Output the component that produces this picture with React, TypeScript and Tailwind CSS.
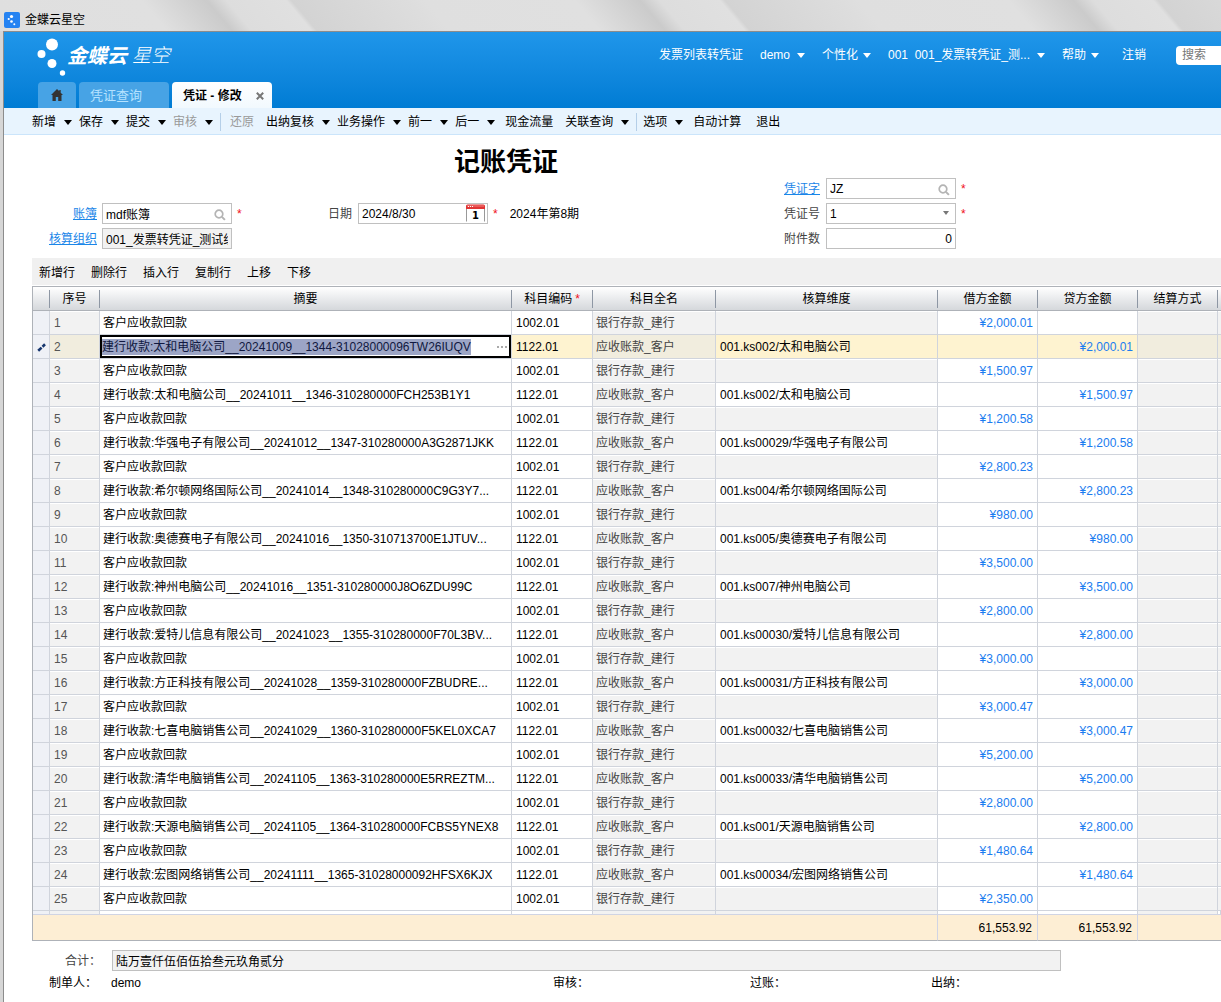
import React, { useEffect, useRef } from 'react';
import clsx from 'clsx';

type Entry = { summary: string; dimension?: string; amount: string };

const received = (amount: string): Entry => ({ summary: '客户应收款回款', amount });

// debit and credit lines alternate: bank account first, then the customer
const entries: Entry[] = [
    received('¥2,000.01'),
    { summary: '建行收款:太和电脑公司__20241009__1344-31028000096TW26IUQV', dimension: '001.ks002/太和电脑公司', amount: '¥2,000.01' },
    received('¥1,500.97'),
    { summary: '建行收款:太和电脑公司__20241011__1346-310280000FCH253B1Y1', dimension: '001.ks002/太和电脑公司', amount: '¥1,500.97' },
    received('¥1,200.58'),
    { summary: '建行收款:华强电子有限公司__20241012__1347-310280000A3G2871JKK', dimension: '001.ks00029/华强电子有限公司', amount: '¥1,200.58' },
    received('¥2,800.23'),
    { summary: '建行收款:希尔顿网络国际公司__20241014__1348-310280000C9G3Y7...', dimension: '001.ks004/希尔顿网络国际公司', amount: '¥2,800.23' },
    received('¥980.00'),
    { summary: '建行收款:奥德赛电子有限公司__20241016__1350-310713700E1JTUV...', dimension: '001.ks005/奥德赛电子有限公司', amount: '¥980.00' },
    received('¥3,500.00'),
    { summary: '建行收款:神州电脑公司__20241016__1351-310280000J8O6ZDU99C', dimension: '001.ks007/神州电脑公司', amount: '¥3,500.00' },
    received('¥2,800.00'),
    { summary: '建行收款:爱特儿信息有限公司__20241023__1355-310280000F70L3BV...', dimension: '001.ks00030/爱特儿信息有限公司', amount: '¥2,800.00' },
    received('¥3,000.00'),
    { summary: '建行收款:方正科技有限公司__20241028__1359-310280000FZBUDRE...', dimension: '001.ks00031/方正科技有限公司', amount: '¥3,000.00' },
    received('¥3,000.47'),
    { summary: '建行收款:七喜电脑销售公司__20241029__1360-310280000F5KEL0XCA7', dimension: '001.ks00032/七喜电脑销售公司', amount: '¥3,000.47' },
    received('¥5,200.00'),
    { summary: '建行收款:清华电脑销售公司__20241105__1363-310280000E5RREZTM...', dimension: '001.ks00033/清华电脑销售公司', amount: '¥5,200.00' },
    received('¥2,800.00'),
    { summary: '建行收款:天源电脑销售公司__20241105__1364-310280000FCBS5YNEX8', dimension: '001.ks001/天源电脑销售公司', amount: '¥2,800.00' },
    received('¥1,480.64'),
    { summary: '建行收款:宏图网络销售公司__20241111__1365-31028000092HFSX6KJX', dimension: '001.ks00034/宏图网络销售公司', amount: '¥1,480.64' },
    received('¥2,350.00'),
];

const EDITING = 1;

const columns = ['', '序号', '摘要', '科目编码', '科目全名', '核算维度', '借方金额', '贷方金额', '结算方式', ''];

const toolbar: { label: string; menu?: boolean; disabled?: boolean; divider?: boolean }[] = [
    { label: '新增', menu: true },
    { label: '保存', menu: true },
    { label: '提交', menu: true },
    { label: '审核', menu: true, disabled: true, divider: true },
    { label: '还原', disabled: true },
    { label: '出纳复核', menu: true },
    { label: '业务操作', menu: true },
    { label: '前一', menu: true },
    { label: '后一', menu: true },
    { label: '现金流量' },
    { label: '关联查询', menu: true, divider: true },
    { label: '选项', menu: true },
    { label: '自动计算' },
    { label: '退出' },
];

const Caret = () => (
    <svg width="8" height="5" viewBox="0 0 8 5" fill="currentColor" aria-hidden="true">
        <path d="M0 0h8L4 5z" />
    </svg>
);

const SearchIcon = () => (
    <svg className="absolute right-[6px] top-[6px]" width="12" height="12" viewBox="0 0 12 12" fill="none" stroke="#b4b4b4" aria-hidden="true">
        <circle cx="5" cy="5" r="3.8" strokeWidth="1.7" />
        <path d="M7.9 7.9l3 3" strokeWidth="2" />
    </svg>
);

const CalendarIcon = () => (
    <svg className="absolute right-[3px] top-[1px]" width="19" height="18" viewBox="0 0 19 18" aria-hidden="true">
        <path d="M.5 4v13.5M18.5 4v13.5" stroke="#999" />
        <path d="M0 2a1.500 1.500 0 0 1 1.500-1.500h16A1.500 1.500 0 0 1 19 2v3H0z" fill="#e03535" />
        <path d="M1 1.500h17v1H1z" fill="#f58080" />
        <path d="M2 2.500h1M4 2.500h1M6 2.500h1" stroke="#fff" />
        <text x="9.500" y="15" textAnchor="middle" fontSize="10" fontWeight="bold" fontFamily="DejaVu Sans, sans-serif">1</text>
    </svg>
);

const Logo = () => (
    <div className="flex text-white">
        <svg width="30" height="38" viewBox="0 0 30 38" fill="currentColor" aria-hidden="true">
            <circle cx="15" cy="6.500" r="6" />
            <circle cx="4.500" cy="16" r="4" />
            <circle cx="15" cy="25.500" r="4.500" />
            <circle cx="25.500" cy="35" r="2.700" />
        </svg>
        <span className="flex h-[36px] items-center gap-[5px] whitespace-nowrap text-[20px] leading-6">
            <b className="italic">金蝶云</b>
            <span className="text-[19px] font-light italic">星空</span>
        </span>
    </div>
);

const Required = () => <span className="ml-[5px] text-[#f01020]">*</span>;

const box = 'h-[21px] w-full border border-[#c0c0c0] px-[3px] text-black outline-none';

const NavMenu = ({ label, className }: { label: string; className?: string }) => (
    <button className="flex items-center gap-[5px] whitespace-nowrap">
        <span className={className}>{label}</span>
        <Caret />
    </button>
);

const Header = () => (
    <header className="bg-gradient-to-b from-[#1f96ea] to-[#007cd4] text-white">
        <div className="flex h-[50px] items-start justify-between pl-[33px]">
            <div className="pt-[6px]">
                <Logo />
            </div>
            <nav className="flex h-[46px] items-center gap-[17px]">
                <a href="#voucher" className="whitespace-nowrap">发票列表转凭证</a>
                <NavMenu label="demo" className="w-8 text-left" />
                <NavMenu label="个性化" />
                <NavMenu label="001  001_发票转凭证_测..." className="w-[144px] whitespace-pre text-left" />
                <NavMenu label="帮助" />
                <a href="#logout" className="ml-[6px] mr-[13px] whitespace-nowrap">注销</a>
                <input
                    aria-label="搜索"
                    placeholder="搜索"
                    className="h-[19px] w-[45px] rounded-l bg-white px-[6px] text-black outline-none placeholder:text-[#777]"
                />
            </nav>
        </div>
        <div className="flex h-[26px] gap-[3px] pl-[34px]">
            <button aria-label="首页" className="flex w-[38px] items-center justify-center rounded-t bg-[#47a3e5] text-[#333]">
                <svg width="12" height="12" viewBox="0 0 12 12" fill="currentColor" aria-hidden="true">
                    <path d="M6 0L0 6h1.500v6h3.300V8h2.400v4h3.300V6H12L9.700 3.700V1H8.300v1.300z" />
                </svg>
            </button>
            <button className="w-[90px] rounded-t bg-[#47a3e5] pl-[11px] pt-[2px] text-left text-[13px] text-[#b5e2ff]">凭证查询</button>
            <div className="flex w-[100px] items-center justify-between rounded-t bg-gradient-to-b from-white to-[#f2f9fe] pl-[11px] pr-2 pt-[2px] font-bold text-black">
                <span>凭证 - 修改</span>
                <button aria-label="关闭" className="text-[#777]">
                    <svg width="8" height="8" viewBox="0 0 8 8" stroke="currentColor" strokeWidth="2" aria-hidden="true">
                        <path d="M.8.8l6.400 6.400M7.200.8L.8 7.200" />
                    </svg>
                </button>
            </div>
        </div>
    </header>
);

const Toolbar = () => (
    <div className="flex h-[27px] items-center border-b border-[#cbe5fb] bg-[#e8f4fe] pl-7 pt-[2px]">
        {toolbar.map((item) => (
            <React.Fragment key={item.label}>
                <button
                    className={clsx(
                        'flex items-center gap-2 whitespace-nowrap',
                        item.menu ? 'pr-[7px]' : 'pl-[3px] pr-3',
                        item.disabled && 'text-[#999]'
                    )}
                >
                    {item.label}
                    {item.menu && (
                        <span className="text-black">
                            <Caret />
                        </span>
                    )}
                </button>
                {item.divider && <span className="mr-[6px] h-[18px] w-px bg-[#b5cfe8]" />}
            </React.Fragment>
        ))}
    </div>
);

const VoucherForm = () => (
    <form className="grid grid-cols-[296px_456px_1fr] pb-[9px]">
        <div className="flex flex-col gap-1 pt-[68px]">
            <div className="flex items-center">
                <a id="book-label" href="#book" className="mr-[5px] w-[65px] text-right text-[#1a86e8] underline">账簿</a>
                <div className="relative w-[130px]">
                    <input aria-labelledby="book-label" defaultValue="mdf账簿" className={box} />
                    <SearchIcon />
                </div>
                <Required />
            </div>
            <div className="flex items-center">
                <a id="org-label" href="#org" className="mr-[5px] w-[65px] text-right text-[#1a86e8] underline">核算组织</a>
                <div className="w-[130px]">
                    <input aria-labelledby="org-label" readOnly defaultValue="001_发票转凭证_测试组织" className={clsx(box, 'bg-[#f2f2f2]')} />
                </div>
            </div>
        </div>
        <div>
            <h1 className="flex h-[68px] items-start pl-[126px] pt-[7px] text-[26px] font-bold leading-10">记账凭证</h1>
            <div className="flex items-center">
                <label htmlFor="date" className="mr-[6px] text-[#444]">日期</label>
                <div className="relative w-[130px]">
                    <input id="date" defaultValue="2024/8/30" className={box} />
                    <CalendarIcon />
                </div>
                <Required />
                <span className="ml-3">2024年第8期</span>
            </div>
        </div>
        <div className="flex flex-col gap-1 pt-[43px]">
            <div className="flex items-center">
                <a id="word-label" href="#word" className="mr-[6px] text-[#1a86e8] underline">凭证字</a>
                <div className="relative w-[130px]">
                    <input aria-labelledby="word-label" defaultValue="JZ" className={box} />
                    <SearchIcon />
                </div>
                <Required />
            </div>
            <div className="flex items-center">
                <label htmlFor="number" className="mr-[6px] text-[#444]">凭证号</label>
                <div className="relative w-[130px]">
                    <select id="number" className={clsx(box, 'appearance-none')}>
                        <option>1</option>
                    </select>
                    <svg className="absolute right-[7px] top-2" width="6" height="4" viewBox="0 0 6 4" fill="#777" aria-hidden="true">
                        <path d="M0 0h6L3 4z" />
                    </svg>
                </div>
                <Required />
            </div>
            <div className="flex items-center">
                <label htmlFor="attachments" className="mr-[6px] text-[#444]">附件数</label>
                <div className="w-[130px]">
                    <input id="attachments" defaultValue="0" className={clsx(box, 'text-right')} />
                </div>
            </div>
        </div>
    </form>
);

const SummaryEditor = ({ value }: { value: string }) => {
    const ref = useRef<HTMLInputElement>(null);

    useEffect(() => {
        ref.current?.focus();
        ref.current?.select();
    }, []);

    return (
        <div className="flex h-[23px] items-center border-2 border-black bg-white">
            <input
                ref={ref}
                aria-label="摘要"
                defaultValue={value}
                className="h-4 min-w-0 flex-1 text-[#101840] outline-none selection:bg-[#9ca5c6] selection:text-[#101840]"
            />
            <button aria-label="选择摘要" className="flex h-full w-3 items-center gap-[2px]">
                <i className="size-[2px] bg-[#aaa]" />
                <i className="size-[2px] bg-[#aaa]" />
                <i className="size-[2px] bg-[#aaa]" />
            </button>
        </div>
    );
};

const VoucherTable = () => {
    const frame = 'h-6 overflow-hidden whitespace-nowrap border-b border-r border-[#d0d4dc]';
    const cell = clsx(frame, 'pb-0 pt-px');
    const sum = 'h-[27px] border-y border-t-[#d0d4e4] border-b-[#aeb2b8] p-0';

    return (
        <div className="border-l border-t border-[#aeb2b8]">
            <table className="w-full table-fixed border-separate border-spacing-0">
                <colgroup>
                    <col className="w-[17px]" />
                    <col className="w-[50px]" />
                    <col />
                    <col className="w-[81px]" />
                    <col className="w-[123px]" />
                    <col className="w-[222px]" />
                    <col className="w-[100px]" />
                    <col className="w-[100px]" />
                    <col className="w-[80px]" />
                    <col className="w-[3px]" />
                </colgroup>
                <thead>
                    <tr className="bg-gradient-to-b from-white to-[#d3d6da]">
                        {columns.map((name, i) => (
                            <th key={i} className="h-6 border-b border-[#aeb2b8] p-0 font-normal">
                                <div className={clsx('h-[18px] leading-[18px]', i < 9 && 'border-r border-[#8e97a4]')}>
                                    {name}
                                    {name === '科目编码' && <span className="ml-[3px] text-[#f01020]">*</span>}
                                </div>
                            </th>
                        ))}
                    </tr>
                </thead>
                <tbody>
                    {entries.map((entry, i) => {
                        const active = i === EDITING;
                        const debit = i % 2 === 0;
                        const open = active ? 'bg-[#fef3d0]' : 'bg-white';
                        const locked = active ? 'bg-[#f1edde]' : 'bg-[#f2f2f2] shadow-[inset_0_1px_#fff]';
                        return (
                            <tr key={i}>
                                <td className={clsx(cell, 'bg-[#eff1f6] px-0')}>
                                    {active && (
                                        <svg className="mx-auto" width="9" height="9" viewBox="0 0 9 9" stroke="#16366e" strokeWidth="2.600" aria-hidden="true">
                                            <path d="M1.200 7.800L4.600 4.600M5.500 3.700L8 1.300" />
                                        </svg>
                                    )}
                                </td>
                                <td className={clsx(cell, locked, 'pl-1 pr-0 text-[#555]')}>{i + 1}</td>
                                <td className={clsx(active ? [frame, 'p-0'] : [cell, 'pl-[3px] pr-0'], 'bg-white')}>
                                    {active ? <SummaryEditor value={entry.summary} /> : entry.summary}
                                </td>
                                <td className={clsx(cell, open, 'pl-1 pr-0')}>{debit ? '1002.01' : '1122.01'}</td>
                                <td className={clsx(cell, locked, 'pl-[3px] pr-0 text-[#444]')}>{debit ? '银行存款_建行' : '应收账款_客户'}</td>
                                <td className={clsx(cell, debit ? locked : open, 'pl-1 pr-0')}>{entry.dimension}</td>
                                <td className={clsx(cell, open, 'pl-0 pr-1 text-right text-[#1a7cf0]')}>{debit && entry.amount}</td>
                                <td className={clsx(cell, open, 'pl-0 pr-1 text-right text-[#1a7cf0]')}>{!debit && entry.amount}</td>
                                <td className={clsx(cell, locked, 'px-0')} />
                                <td className={clsx('border-b border-[#d0d4dc] p-0', locked)} />
                            </tr>
                        );
                    })}
                    {/* top edge of the next row, cut off by the totals */}
                    <tr>
                        {columns.map((_, i) => (
                            <td
                                key={i}
                                className={clsx(
                                    'h-[3px] border-r border-[#d0d4dc] p-0',
                                    i === 0 && 'bg-[#eff1f6]',
                                    [1, 4, 5, 8].includes(i) && 'bg-[#f2f2f2]'
                                )}
                            />
                        ))}
                    </tr>
                </tbody>
                <tfoot>
                    <tr className="bg-[#fdeed4]">
                        <td colSpan={6} className={clsx(sum, 'border-r border-r-[#d0d4e4]')} />
                        <td className={clsx(sum, 'border-r border-r-[#d0d4e4] pr-[5px] text-right')}>61,553.92</td>
                        <td className={clsx(sum, 'border-r border-r-[#d0d4e4] pr-[5px] text-right')}>61,553.92</td>
                        <td colSpan={2} className={sum} />
                    </tr>
                </tfoot>
            </table>
        </div>
    );
};

const App = () => {
    return (
        <div className="min-h-screen bg-[#d6d6d6] font-['Liberation_Sans','Noto_Sans_CJK_SC',sans-serif] text-[12px] leading-4 text-black">
            <div className="flex h-[31px] items-center gap-[5px] bg-[repeating-linear-gradient(50deg,#dddddd_0px,#dfdfdf_13px,#e0e0e0_128px,#cbcbcb_178px,#dddddd_193px,#e0e0e0_239px,#d3d3d3_243px,#dddddd_332px)] pl-1 pt-[9px]">
                <svg width="16" height="16" viewBox="0 0 16 16" aria-hidden="true">
                    <rect width="16" height="16" rx="2" fill="#2583f2" />
                    <g fill="#fff">
                        <circle cx="7.500" cy="4.500" r="1.600" />
                        <circle cx="4.700" cy="7" r="1.100" />
                        <circle cx="7.500" cy="9.500" r="1.300" />
                        <circle cx="10.300" cy="12.300" r="1" />
                    </g>
                </svg>
                <span>金蝶云星空</span>
            </div>
            <div className="ml-[3px] min-h-[calc(100vh-31px)] overflow-hidden border-l border-t border-[#8c8c8c] bg-white">
                <Header />
                <Toolbar />
                <main className="pl-7">
                    <VoucherForm />
                    <div className="mb-px flex h-[27px] items-center gap-4 bg-[#f0f0f0] pl-[7px] pt-[2px]">
                        {['新增行', '删除行', '插入行', '复制行', '上移', '下移'].map((label) => (
                            <button key={label}>{label}</button>
                        ))}
                    </div>
                    <VoucherTable />
                    <div className="mt-[9px] flex items-center pr-[160px]">
                        <label htmlFor="total" className="w-20 pl-[33px] text-[#444]">合计：</label>
                        <input
                            id="total"
                            readOnly
                            defaultValue="陆万壹仟伍佰伍拾叁元玖角贰分"
                            className="h-[21px] flex-1 border border-[#c0c0c0] bg-[#f2f2f2] px-[3px] outline-none"
                        />
                    </div>
                    <div className="mt-1 grid grid-cols-[504px_197px_181px_1fr] pl-[17px]">
                        <div className="flex gap-[14px]">
                            <span>制单人：</span>
                            <span>demo</span>
                        </div>
                        <span>审核：</span>
                        <span>过账：</span>
                        <span>出纳：</span>
                    </div>
                </main>
            </div>
        </div>
    );
};

export default App;
